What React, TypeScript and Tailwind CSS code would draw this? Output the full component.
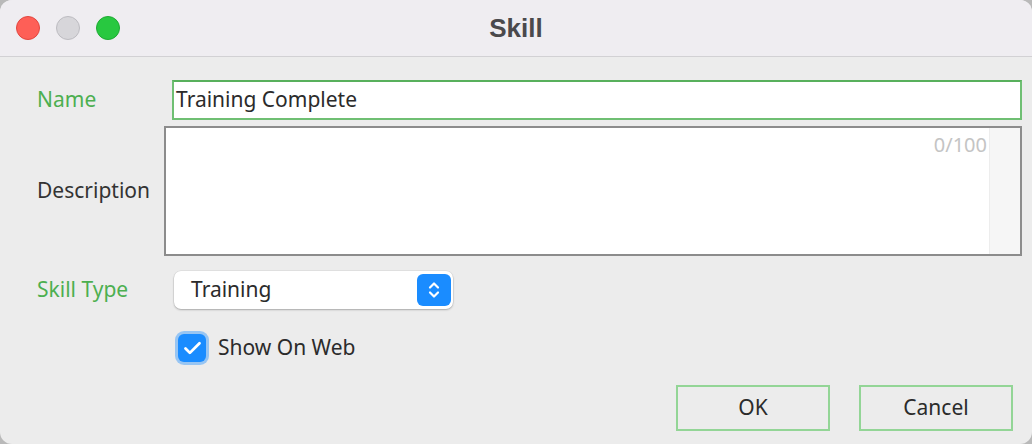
import { Check } from 'lucide-react';

const font = { fontFamily: '"Noto Sans", "Open Sans", sans-serif' };

function TrafficLights() {
  return (
    <div className="flex items-center gap-[16px] pl-[16px]">
      <span className="w-[24px] h-[24px] rounded-full bg-[#fe5f57] border border-[#e2463f]" />
      <span className="w-[24px] h-[24px] rounded-full bg-[#d7d6da] border border-[#bdbcc1]" />
      <span className="w-[24px] h-[24px] rounded-full bg-[#28c840] border border-[#1eaa33]" />
    </div>
  );
}

export default function App() {
  return (
    <div className="w-[1032px] h-[444px] bg-[#b9b9b9]" style={font}>
      <div className="w-full h-full rounded-[12px] overflow-hidden bg-[#ececec] flex flex-col">
        {/* title bar */}
        <header className="relative h-[57px] shrink-0 bg-[#efedf1] border-b border-[#d2d1d4] flex items-center">
          <TrafficLights />
          <h1 className="absolute inset-0 flex items-center justify-center text-[26px] font-bold text-[#4a494c] font-['Liberation_Sans',sans-serif]">
            Skill
          </h1>
        </header>

        <main className="flex-1 flex flex-col pl-[37px] pr-[10px] text-[21px] text-[#333]">
          {/* name */}
          <div className="flex items-center mt-[23px] h-[40px]">
            <label className="w-[135px] text-[#4caf50]">Name</label>
            <div className="flex-1 h-full bg-white border-2 border-[#6fbf73] border-t-[#58b05c] flex items-center pl-[2px] text-[#2b2b2b]">
              Training Complete
            </div>
          </div>

          {/* description */}
          <div className="flex items-center mt-[6px] h-[130px]">
            <label className="w-[127px]">Description</label>
            <div className="flex-1 h-full bg-white border-2 border-[#8c8c8c] flex">
              <div className="flex-1 flex justify-end pr-[2px] pt-[4px] text-[#c4c4c4] text-[20px] leading-[26px]">
                0/100
              </div>
              <div className="w-[31px] bg-[#f6f6f6] border-l border-[#ededed]" />
            </div>
          </div>

          {/* skill type */}
          <div className="flex items-center mt-[15px] h-[38px]">
            <label className="w-[137px] text-[#4caf50]">Skill Type</label>
            <div className="w-[279px] h-full bg-white rounded-[7px] shadow-[0_1px_2px_rgba(0,0,0,0.25),0_0_0_0.5px_rgba(0,0,0,0.08)] flex items-center justify-between pl-[17px] pr-[2px] text-[#2b2b2b]">
              <span>Training</span>
              <span className="w-[34px] h-[32px] rounded-[6px] bg-[#1a8cff] flex items-center justify-center">
                <svg width="14" height="22" viewBox="0 0 14 22" fill="none" stroke="white" strokeWidth="2.2" strokeLinecap="round" strokeLinejoin="round">
                  <path d="M3 8.5 L7 4.5 L11 8.5" />
                  <path d="M3 13.5 L7 17.5 L11 13.5" />
                </svg>
              </span>
            </div>
          </div>

          {/* show on web */}
          <div className="flex items-center mt-[25px] h-[28px] pl-[141px]">
            <span className="w-[28px] h-[28px] rounded-[6px] bg-[#1a8cff] shadow-[0_0_0_3px_rgba(26,140,255,0.4)] flex items-center justify-center">
              <Check className="w-[21px] h-[21px] text-white" strokeWidth={3.2} />
            </span>
            <span className="ml-[12px] text-[#2b2b2b]">Show On Web</span>
          </div>

          {/* buttons */}
          <div className="flex justify-end gap-[29px] mt-[23px] pr-[9px]">
            <button className="w-[154px] h-[46px] border-2 border-[#93d596] bg-[#ececec] text-[#2b2b2b] text-[21px]">
              OK
            </button>
            <button className="w-[154px] h-[46px] border-2 border-[#93d596] bg-[#ececec] text-[#2b2b2b] text-[21px]">
              Cancel
            </button>
          </div>
        </main>
      </div>
    </div>
  );
}
